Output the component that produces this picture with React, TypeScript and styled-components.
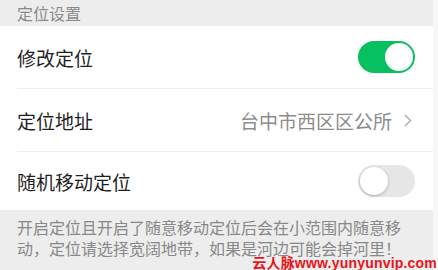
import React, { useState } from "react";
import styled, { createGlobalStyle } from "styled-components";

const Global = createGlobalStyle`
  html, body { margin: 0; padding: 0; background: #f7f7f7; }
  body { font-family: "Noto Sans CJK SC", "Noto Sans", sans-serif; }
`;

const Page = styled.div`
  position: relative;
  width: 438px;
  height: 270px;
  overflow: hidden;
  display: flex;
`;

const Column = styled.div`
  width: 433px;
  height: 270px;
  background: #ededed;
  display: flex;
  flex-direction: column;
`;

const SectionTitle = styled.div`
  height: 26px;
  padding-left: 17px;
  display: flex;
  align-items: center;
  font-size: 16px;
  color: #8a8a8a;
  line-height: 1;
`;

const List = styled.div`
  background: #fff;
  display: flex;
  flex-direction: column;
`;

const Row = styled.div<{ $h: number; $last?: boolean }>`
  height: ${(p) => p.$h}px;
  margin-left: 17px;
  padding-right: 18px;
  display: flex;
  align-items: center;
  justify-content: space-between;
  border-bottom: ${(p) => (p.$last ? "none" : "1px solid #ececec")};
`;

const Label = styled.span`
  font-size: 19px;
  color: #1f1f1f;
  line-height: 1;
`;

const Value = styled.span`
  display: flex;
  align-items: center;
  gap: 12px;
  font-size: 19px;
  color: #8c8c8c;
  line-height: 1;
  margin-right: 3px;
`;

const Track = styled.button<{ $on: boolean }>`
  position: relative;
  width: 57px;
  height: 32px;
  border-radius: 16px;
  border: none;
  padding: 0;
  cursor: pointer;
  background: ${(p) => (p.$on ? "#07c160" : "#e6e6e6")};
`;

const Knob = styled.span<{ $on: boolean }>`
  position: absolute;
  top: 2px;
  left: ${(p) => (p.$on ? "27px" : "2px")};
  width: 28px;
  height: 28px;
  border-radius: 50%;
  background: #fff;
  box-shadow: ${(p) => (p.$on ? "none" : "0 1px 3px rgba(0,0,0,0.25)")};
`;

const Footer = styled.div`
  padding: 7px 17px 0 17px;
  font-size: 16px;
  line-height: 21px;
  color: #888;
`;

const Watermark = styled.div`
  position: absolute;
  right: 1px;
  bottom: 0;
  font-family: "Liberation Sans", "Noto Sans CJK SC", sans-serif;
  font-weight: 700;
  font-size: 14px;
  line-height: 14px;
  color: #e8141b;
  letter-spacing: 0.2px;
`;

const Switch = ({ on, onToggle }: { on: boolean; onToggle: () => void }) => (
  <Track $on={on} onClick={onToggle} aria-pressed={on}>
    <Knob $on={on} />
  </Track>
);

const Chevron = () => (
  <svg width="8" height="13" viewBox="0 0 8 13" fill="none">
    <path d="M1 1l5.5 5.5L1 12" stroke="#a8a8a8" strokeWidth="1.4" />
  </svg>
);

export default function App() {
  const [modify, setModify] = useState(true);
  const [random, setRandom] = useState(false);
  return (
    <Page>
      <Global />
      <Column>
        <SectionTitle>定位设置</SectionTitle>
        <List>
          <Row $h={62}>
            <Label>修改定位</Label>
            <Switch on={modify} onToggle={() => setModify(!modify)} />
          </Row>
          <Row $h={62}>
            <Label>定位地址</Label>
            <Value>
              台中市西区区公所
              <Chevron />
            </Value>
          </Row>
          <Row $h={58} $last>
            <Label>随机移动定位</Label>
            <Switch on={random} onToggle={() => setRandom(!random)} />
          </Row>
        </List>
        <Footer>
          开启定位且开启了随意移动定位后会在小范围内随意移动，定位请选择宽阔地带，如果是河边可能会掉河里！
        </Footer>
      </Column>
      <Watermark>云人脉www.yunyunvip.com</Watermark>
    </Page>
  );
}
